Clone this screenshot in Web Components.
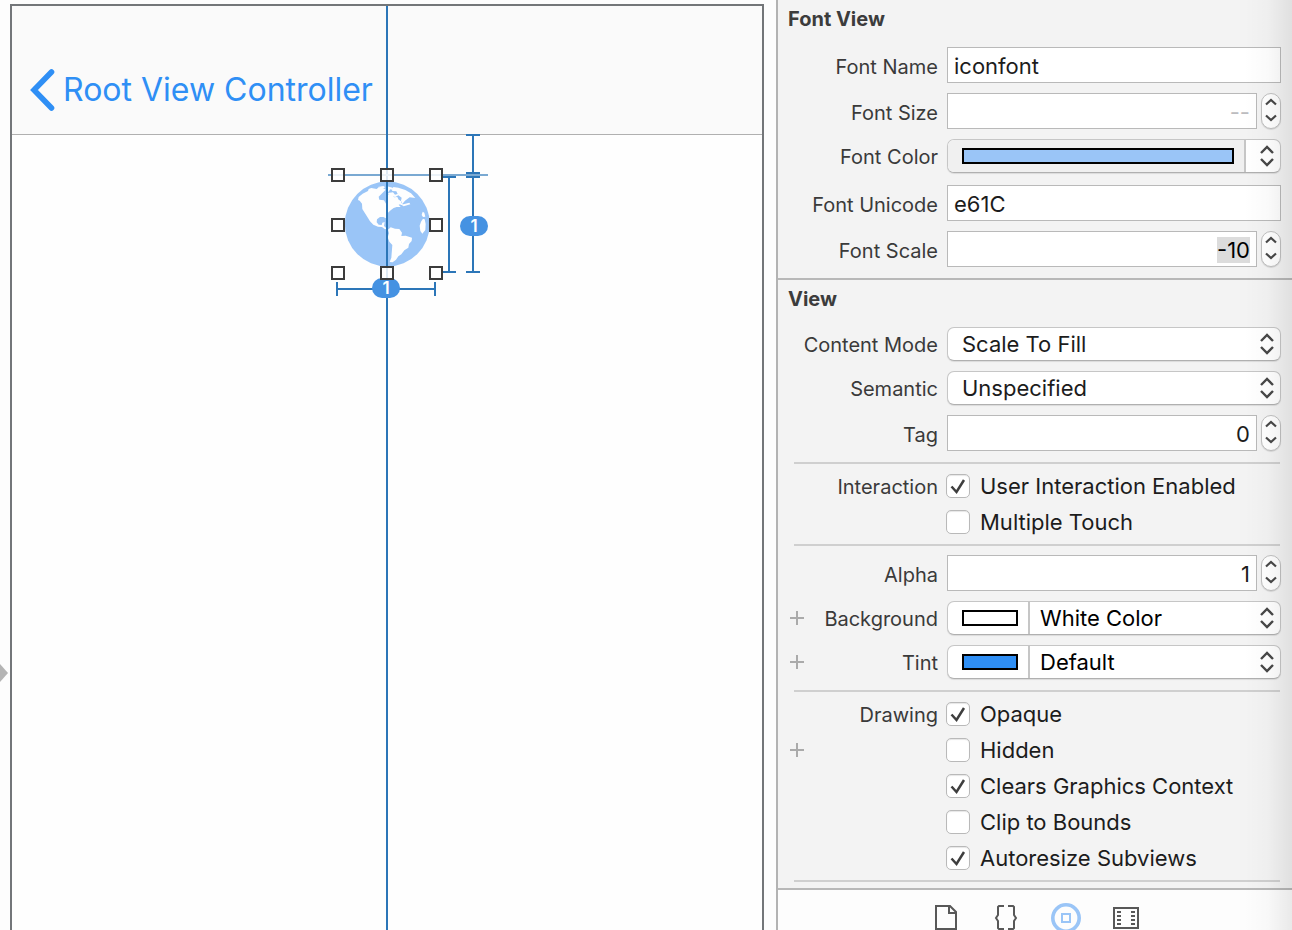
<!DOCTYPE html>
<html lang="en">
<head>
<meta charset="utf-8">
<title>Interface Builder</title>
<style>
  body { margin: 0; height: 100vh; overflow: hidden; font-family: Inter, "Noto Sans", sans-serif; background: #fdfdfd; color: #262626; }
</style>
</head>
<body>
<ib-window>
  <ib-canvas slot="canvas">
    <ib-nav-bar slot="bar">Root View Controller</ib-nav-bar>
    <ib-selection></ib-selection>
  </ib-canvas>
  <ib-inspector slot="inspector">
    <ib-section heading="Font View">
      <ib-group>
        <text-row label="Font Name" value="iconfont"></text-row>
        <number-row label="Font Size" placeholder="--"></number-row>
        <color-row label="Font Color" color="#9ac5f7" wide></color-row>
        <text-row label="Font Unicode" value="e61C"></text-row>
        <number-row label="Font Scale" value="-10" selected></number-row>
      </ib-group>
    </ib-section>
    <ib-section heading="View">
      <ib-group>
        <select-row label="Content Mode" value="Scale To Fill"></select-row>
        <select-row label="Semantic" value="Unspecified"></select-row>
        <number-row label="Tag" value="0"></number-row>
      </ib-group>
      <ib-group divided dense>
        <check-row label="Interaction" option="User Interaction Enabled" checked></check-row>
        <check-row option="Multiple Touch"></check-row>
      </ib-group>
      <ib-group divided>
        <number-row label="Alpha" value="1"></number-row>
        <color-row label="Background" color="#ffffff" value="White Color" variable></color-row>
        <color-row label="Tint" color="#2f8ff5" value="Default" variable></color-row>
      </ib-group>
      <ib-group divided dense>
        <check-row label="Drawing" option="Opaque" checked></check-row>
        <check-row option="Hidden" variable></check-row>
        <check-row option="Clears Graphics Context" checked></check-row>
        <check-row option="Clip to Bounds"></check-row>
        <check-row option="Autoresize Subviews" checked></check-row>
      </ib-group>
      <ib-group divided last></ib-group>
    </ib-section>
    <ib-library-tabs></ib-library-tabs>
  </ib-inspector>
</ib-window>

<script>
const define = (name, html, setup) => customElements.define(name, class extends HTMLElement {
  connectedCallback() {
    if (this.shadowRoot) return;
    this.attachShadow({ mode: 'open' }).innerHTML = typeof html === 'function' ? html(this) : html;
    if (setup) setup(this, this.shadowRoot);
  }
});

define('ib-window', `
  <style>
    :host { display: flex; height: 100vh; overflow: hidden; }
    main { flex: 1; min-width: 0; display: flex; }
    aside { flex: 0 0 516px; }
  </style>
  <main><slot name="canvas"></slot></main>
  <aside><slot name="inspector"></slot></aside>`);

define('ib-canvas', `
  <style>
    :host { flex: 1; display: flex; position: relative; padding: 4px 12px 0 10px; background: #fdfdfd; }
    .entry { position: absolute; left: 0; top: 664px; width: 8px; height: 18px; }
    .scene { flex: 1; position: relative; border: 2px solid #737679; border-bottom: 0; background: #fefefe; }
    .guide { position: absolute; top: 0; bottom: 0; left: 50%; width: 2px; margin-left: -1px; background: #2c76b8; }
  </style>
  <svg class="entry" viewBox="0 0 8 18" aria-hidden="true"><path d="M0 0L8 9L0 18Z" fill="#b4b4b4"/></svg>
  <div class="scene">
    <slot name="bar"></slot>
    <div class="guide"></div>
    <slot></slot>
  </div>`);

define('ib-nav-bar', `
  <style>
    :host { display: flex; align-items: center; height: 88px; padding: 40px 18px 0; background: #fafafa; border-bottom: 1px solid #b0b0b0; }
    button { display: flex; align-items: center; gap: 8px; padding: 0; border: 0; background: none; color: #2f8ff5; font: 400 32px/40px Inter, sans-serif; white-space: nowrap; }
    svg { width: 25px; height: 42px; }
  </style>
  <button type="button">
    <svg viewBox="0 0 25 42" aria-hidden="true"><path d="M21.500 3L4 21L21.500 39" fill="none" stroke="currentColor" stroke-width="5.600" stroke-linecap="round" stroke-linejoin="miter"/></svg>
    <slot></slot>
  </button>`);

define('ib-selection', () => {
  const handles = [[338,175],[387,175],[436,175],[338,225],[436,225],[338,273],[387,273],[436,273]]
    .map(([x, y]) => `<rect x="${x - 6}" y="${y - 6}" width="12" height="12"/>`).join('');
  return `
  <style>
    :host { display: flex; justify-content: center; position: relative; }
    svg { width: 220px; height: 180px; overflow: visible; }
    text { font: 600 17px Inter, sans-serif; fill: #fff; text-anchor: middle; }
  </style>
  <svg viewBox="277 135 220 180">
    <circle cx="387.300" cy="224" r="42.500" fill="#9ac5f7"/>
    <g transform="translate(320 125) scale(.33333)" fill="#fefefe">
      <path d="M114 225L116 216L128 206L144 198L146 192L154 189L170 192L176 187L190 190L197 194L185 206L176 215L178 224L192 226L198 236L204 226L200 217L206 207L216 210L222 217L232 216L236 224L243 229L244 237L236 239L242 246L230 246L221 249L213 255L204 263L200 271L202 281L196 279L190 276L180 276L171 283L170 292L176 299L185 300L187 293L194 291L192 303L198 308L203 313L194 312L186 306L174 305L160 299L150 289L144 279L135 265L127 252L126 236L119 227Z"/>
      <path d="M174 186L190 183L196 187L187 191ZM201 184L218 188L222 196L211 193L205 201L199 192Z"/>
      <path d="M203 204L219 202L225 209L233 207L229 199L216 198L220 186L235 188L256 195L273 205L286 219L269 217L255 227L247 237L243 227L245 218L235 211L226 216L212 213Z"/>
      <path d="M237 226L249 239L243 240L234 230ZM244 239L268 233L271 238L251 244Z"/>
      <path d="M204 314L212 307L225 311L238 312L246 323L244 333L257 332L276 338L275 348L267 357L265 368L253 376L244 388L235 394L228 404L218 412L209 411L214 398L217 360L208 350L203 337L207 325Z"/>
      <path d="M308 260L313 263L316 275L309 276L305 270ZM309 281L314 283L317 297L316 315L307 326L301 318L299 302L303 290Z"/>
    </g>
    <rect x="386" y="135" width="2" height="180" fill="#2c76b8"/>
    <rect x="328" y="174" width="160" height="2" fill="#7aa9d2"/>
    <g stroke="#2c76b8" stroke-width="2" fill="none">
      <path d="M473 134V272M466 135H480M466 173H480M466 177H480M466 272H480"/>
      <path d="M449 177V272M442 177H456M442 272H456"/>
      <path d="M337 289H435M337 282V296M435 282V296"/>
    </g>
    <rect x="466" y="174" width="14" height="2" fill="#7aa9d2"/>
    <rect x="460" y="216" width="28" height="20" rx="10" fill="#4592e2"/>
    <text x="474" y="232">1</text>
    <rect x="372" y="278" width="28" height="20" rx="10" fill="#4592e2"/>
    <text x="386" y="294">1</text>
    <g fill="#fff" fill-opacity=".85" stroke="#3c3c3c" stroke-width="2">${handles}</g>
  </svg>`;
});

define('ib-inspector', `
  <style>
    :host { display: flex; flex-direction: column; position: relative; height: 100vh; overflow: hidden; box-sizing: border-box; border-left: 2px solid #b3b3b3; background: #f3f3f3; }
    :host::after { content: ""; position: absolute; inset: 0 0 0 auto; width: 48px; pointer-events: none; background: linear-gradient(90deg, rgba(0,0,0,0), rgba(0,0,0,.02) 50%, rgba(0,0,0,.08)); }
  </style>
  <slot></slot>`);

define('ib-section', host => `
  <style>
    :host { display: block; flex: none; border-bottom: 2px solid #b8b8b8; }
    h2 { margin: 0; padding: 0 10px; font-size: 20px; font-weight: 700; line-height: 38px; color: #3c3c3c; }
  </style>
  <h2>${host.getAttribute('heading')}</h2><slot></slot>`);

define('ib-group', `
  <style>
    :host { display: block; }
    .rows { display: grid; gap: 10px; padding: 9px 11px 11px 0; }
    hr { display: none; margin: 0 12px 0 16px; border: 0; height: 2px; background: #cfcfcf; }
    :host([divided]) hr { display: block; }
    :host([dense]) .rows { gap: 0; padding: 4px 11px 4px 0; }
    :host([last]) .rows { padding: 6px 0 0; }
  </style>
  <hr><div class="rows"><slot></slot></div>`);

const rowStyle = `
  :host { display: grid; grid-template-columns: 160px minmax(0, 1fr); column-gap: 9px; align-items: center; }
  .name { display: flex; align-items: center; justify-content: flex-end; padding-left: 12px; font-size: 20px; line-height: 28px; color: #3a3a3a; white-space: nowrap; }
  .name label { padding-top: 2px; }
  .add { width: 14px; height: 14px; padding: 0; margin-right: auto; border: 0; background: linear-gradient(#aaa, #aaa) center / 14px 2px no-repeat, linear-gradient(#aaa, #aaa) center / 2px 14px no-repeat; }
  .control { display: flex; gap: 4px; }
  input[type=text] { flex: 1; min-width: 0; box-sizing: border-box; height: 36px; padding: 2px 6px 0; border: 1px solid #b9b9b9; border-radius: 0; background: #fff; color: #1c1c1c; font: 22px/28px Inter, sans-serif; outline: 0; }
  .pop { flex: 1; display: flex; position: relative; height: 34px; box-sizing: border-box; border: 1px solid #c6c6c6; border-bottom-color: #b0b0b0; border-radius: 7px; background: #fff; box-shadow: 0 1px 1px rgba(0,0,0,.1); overflow: hidden; }
  select { flex: 1; min-width: 0; appearance: none; border: 0; padding: 0 36px 0 14px; background: none; color: #1c1c1c; font: 22px/28px Inter, sans-serif; outline: 0; }
  .arrows { position: absolute; right: 5px; top: 5px; width: 16px; height: 22px; pointer-events: none; }`;

const fieldStyle = `.name label { padding-top: 4px; }`;

const arrows = `<svg class="arrows" viewBox="0 0 16 22" aria-hidden="true"><path d="M2 8L8 2L14 8M2 14L8 20L14 14" fill="none" stroke="#484848" stroke-width="2.400"/></svg>`;
const nameCell = (host, target) => {
  const add = host.hasAttribute('variable') ? '<button class="add" type="button" aria-label="Add variation"></button>' : '';
  const label = host.getAttribute('label') || '';
  return `<div class="name">${add}${label ? `<label for="${target}">${label}</label>` : ''}</div>`;
};

define('text-row', host => `
  <style>${rowStyle}${fieldStyle}</style>
  ${nameCell(host, 'field')}
  <div class="control"><input id="field" type="text" value="${host.getAttribute('value')}"></div>`);

define('number-row', host => `
  <style>${rowStyle}${fieldStyle}
    input[type=text] { text-align: right; }
    input::placeholder { color: #bcbcc0; opacity: 1; }
    input::selection { background: #dcdcdc; color: #000; }
    .stepper { flex: none; display: flex; flex-direction: column; width: 20px; height: 36px; padding-bottom: 2px; box-sizing: border-box; border: 1px solid #c0c0c0; border-radius: 10px; background: #fff; box-shadow: 0 1px 1px rgba(0,0,0,.12); }
    .stepper button { flex: 1; display: grid; place-items: center; padding: 0; border: 0; background: none; }
    .stepper svg { width: 12px; height: 8px; }
  </style>
  ${nameCell(host, 'field')}
  <div class="control">
    <input id="field" type="text" inputmode="decimal" value="${host.getAttribute('value') || ''}" placeholder="${host.getAttribute('placeholder') || ''}">
    <div class="stepper">
      <button type="button" aria-label="Increase"><svg viewBox="0 0 12 8"><path d="M1 6.500L6 2L11 6.500" fill="none" stroke="#484848" stroke-width="2.200"/></svg></button>
      <button type="button" aria-label="Decrease"><svg viewBox="0 0 12 8"><path d="M1 1.500L6 6L11 1.500" fill="none" stroke="#484848" stroke-width="2.200"/></svg></button>
    </div>
  </div>`, (host, root) => {
  if (host.hasAttribute('selected')) {
    const field = root.getElementById('field');
    field.focus({ preventScroll: true });
    field.select();
  }
});

define('select-row', host => `
  <style>${rowStyle}</style>
  ${nameCell(host, 'field')}
  <div class="control"><div class="pop"><select id="field"><option>${host.getAttribute('value')}</option></select>${arrows}</div></div>`);

define('color-row', host => {
  const wide = host.hasAttribute('wide');
  return `
  <style>${rowStyle}
    :host([wide]) { padding-bottom: 2px; }
    .well { flex: 0 0 82px; display: flex; padding: 8px 10px 8px 14px; border: 0; border-right: 2px solid #c6c6c6; background: none; box-sizing: border-box; }
    .well span { flex: 1; height: 16px; box-sizing: border-box; border: 2px solid #000; background: ${host.getAttribute('color')}; }
    select { padding-left: 10px; color: #000; }
    :host([wide]) .well { flex: 1; background: #f0f0f0; }
    .more { flex: 0 0 34px; border: 0; background: none; }
  </style>
  ${nameCell(host, wide ? 'well' : 'field')}
  <div class="control"><div class="pop">
    <button class="well" id="well" type="button" aria-label="${host.getAttribute('label')} swatch"><span></span></button>
    ${wide ? '<button class="more" type="button" aria-label="Choose color"></button>' : `<select id="field"><option>${host.getAttribute('value')}</option></select>`}
    ${arrows}
  </div></div>`;
});

define('check-row', host => `
  <style>${rowStyle}
    :host { height: 36px; column-gap: 8px; }
    .option { display: flex; align-items: center; gap: 10px; font-size: 22px; line-height: 28px; color: #1c1c1c; white-space: nowrap; }
    .box { display: grid; width: 24px; height: 24px; }
    .box > * { grid-area: 1 / 1; }
    input { appearance: none; margin: 0; box-sizing: border-box; border: 1px solid #b9b9b9; border-radius: 5px; background: #fff; box-shadow: inset 0 1px 1px rgba(0,0,0,.1); }
    .box svg { visibility: hidden; pointer-events: none; }
    input:checked + svg { visibility: visible; }
  </style>
  ${nameCell(host, 'box')}
  <label class="option">
    <span class="box">
      <input id="box" type="checkbox" ${host.hasAttribute('checked') ? 'checked' : ''}>
      <svg viewBox="0 0 24 24" aria-hidden="true"><path d="M5.500 12.500L10.500 18L18 6" fill="none" stroke="#3e3e3e" stroke-width="2.500"/></svg>
    </span>${host.getAttribute('option')}
  </label>`);

define('ib-library-tabs', `
  <style>
    :host { flex: none; display: block; background: #fdfdfd; }
    nav { display: flex; justify-content: center; padding: 13px 0 13px 2px; }
    button { width: 60px; height: 30px; display: grid; place-items: center; padding: 0; border: 0; background: none; color: #585858; }
    button[aria-pressed=true] { color: #9ac5f7; }
    svg { width: 30px; height: 30px; fill: none; stroke: currentColor; stroke-width: 2; }
  </style>
  <nav>
    <button type="button" aria-label="File templates"><svg viewBox="0 0 30 30"><path d="M5 3H19L25 9V26H5ZM18 3V10H25"/></svg></button>
    <button type="button" aria-label="Code snippets"><svg viewBox="0 0 30 30"><path d="M13 3H8L7 4V12L5 15L7 18V25L8 26H13M17 3H22L23 4V12L25 15L23 18V25L22 26H17"/></svg></button>
    <button type="button" aria-label="Objects" aria-pressed="true"><svg viewBox="0 0 30 30"><circle cx="15" cy="15" r="13.200" stroke-width="3.600"/><rect x="11" y="11" width="8" height="8"/></svg></button>
    <button type="button" aria-label="Media"><svg viewBox="0 0 30 30"><path d="M3 5H27V25H3ZM6 9H10M6 13H10M6 17H10M6 21H10M20 9H24M20 13H24M20 17H24M20 21H24"/></svg></button>
  </nav>`);
</script>
</body>
</html>
